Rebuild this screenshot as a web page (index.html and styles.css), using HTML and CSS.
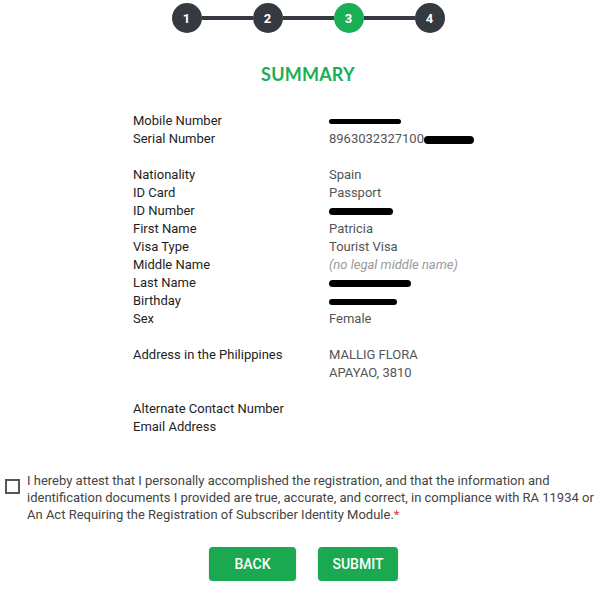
FILE: index.html
```html
<!DOCTYPE html>
<html lang="en">

<head>
  <meta charset="UTF-8">
  <meta name="viewport" content="width=device-width, initial-scale=1.0">
  <title>Registration Summary</title>
  <link rel="stylesheet" href="styles.css">
</head>

<body>
  <div class="stepper">
    <div class="step">1</div>
    <div class="step-line"></div>
    <div class="step">2</div>
    <div class="step-line"></div>
    <div class="step active">3</div>
    <div class="step-line"></div>
    <div class="step">4</div>
  </div>

  <h2 class="title">SUMMARY</h2>

  <div class="summary">
    <div class="group">
      <div class="label">Mobile Number</div>
      <div class="value"><span class="redact r-mobile"></span></div>
      <div class="label">Serial Number</div>
      <div class="value">8963032327100<span class="redact r-serial"></span></div>
    </div>

    <div class="group">
      <div class="label">Nationality</div>
      <div class="value">Spain</div>
      <div class="label">ID Card</div>
      <div class="value">Passport</div>
      <div class="label">ID Number</div>
      <div class="value"><span class="redact r-id"></span></div>
      <div class="label">First Name</div>
      <div class="value">Patricia</div>
      <div class="label">Visa Type</div>
      <div class="value">Tourist Visa</div>
      <div class="label">Middle Name</div>
      <div class="value muted">(no legal middle name)</div>
      <div class="label">Last Name</div>
      <div class="value"><span class="redact r-last"></span></div>
      <div class="label">Birthday</div>
      <div class="value"><span class="redact r-bday"></span></div>
      <div class="label">Sex</div>
      <div class="value">Female</div>
    </div>

    <div class="group">
      <div class="label">Address in the Philippines</div>
      <div class="value">MALLIG FLORA<br>APAYAO, 3810</div>
    </div>

    <div class="group">
      <div class="label">Alternate Contact Number</div>
      <div class="value"></div>
      <div class="label">Email Address</div>
      <div class="value"></div>
    </div>
  </div>

  <label class="attest">
    <input type="checkbox" class="attest-check">
    <span class="attest-text">I hereby attest that I personally accomplished the registration, and that the information and<br>
      identification documents I provided are true, accurate, and correct, in compliance with RA 11934 or<br>
      An Act Requiring the Registration of Subscriber Identity Module.<span class="req">*</span></span>
  </label>

  <div class="actions">
    <button class="btn btn-back">BACK</button>
    <button class="btn btn-submit">SUBMIT</button>
  </div>
</body>

</html>
```

FILE: styles.css
```css
body {
  margin: 0;
  font-family: Roboto, "Liberation Sans", sans-serif;
  background: #fff;
  color: #333;
}

.stepper {
  display: flex;
  align-items: center;
  justify-content: center;
  padding-top: 3px;
  margin-left: 16px;
}

.step {
  width: 30px;
  height: 30px;
  border-radius: 50%;
  background: #343a40;
  color: #fff;
  font-size: 13px;
  font-weight: bold;
  display: flex;
  align-items: center;
  justify-content: center;
}

.step.active {
  background: #1aae55;
}

.step-line {
  width: 51px;
  height: 4px;
  background: #343a40;
}

.title {
  margin: 30px 0 0 16px;
  text-align: center;
  font-family: Lato, "Open Sans", sans-serif;
  font-size: 18px;
  font-weight: bold;
  color: #1aae55;
  letter-spacing: 0.2px;
}

.summary {
  margin: 27px 0 0 133px;
  font-size: 13px;
  line-height: 18px;
}

.group {
  display: grid;
  grid-template-columns: 196px 1fr;
  margin-bottom: 18px;
}

.label {
  color: #1e1e1e;
}

.value {
  color: #555;
}

.muted {
  font-style: italic;
  color: #9a9a9a;
}

.redact {
  display: inline-block;
  background: #000;
  border-radius: 4px;
  height: 7px;
  vertical-align: middle;
}

.r-mobile {
  width: 72px;
  height: 5px;
}

.r-serial {
  width: 50px;
  height: 8px;
  border-radius: 5px;
}

.r-id {
  width: 64px;
}

.r-last {
  width: 82px;
}

.r-bday {
  width: 68px;
  height: 6px;
}

.attest {
  display: flex;
  align-items: flex-start;
  gap: 7px;
  margin: 36px 0 0 5px;
  font-size: 13px;
  line-height: 17px;
  color: #444;
}

.attest-check {
  appearance: none;
  width: 15px;
  height: 15px;
  margin: 7px 0 0 0;
  border: 2px solid #555;
  box-sizing: border-box;
  flex: none;
}

.attest-text {
  white-space: nowrap;
}

.req {
  color: #e53935;
}

.actions {
  display: flex;
  justify-content: center;
  gap: 22px;
  margin: 24px 0 0 0;
  padding-left: 7px;
}

.btn {
  background: #1aa851;
  color: #fff;
  border: none;
  border-radius: 4px;
  font-family: Roboto, sans-serif;
  font-size: 14px;
  font-weight: 500;
  height: 34px;
  padding: 0;
  box-shadow: 0 1px 2px rgba(0, 0, 0, 0.2);
  cursor: pointer;
}

.btn-back {
  width: 87px;
}

.btn-submit {
  width: 80px;
}
```
